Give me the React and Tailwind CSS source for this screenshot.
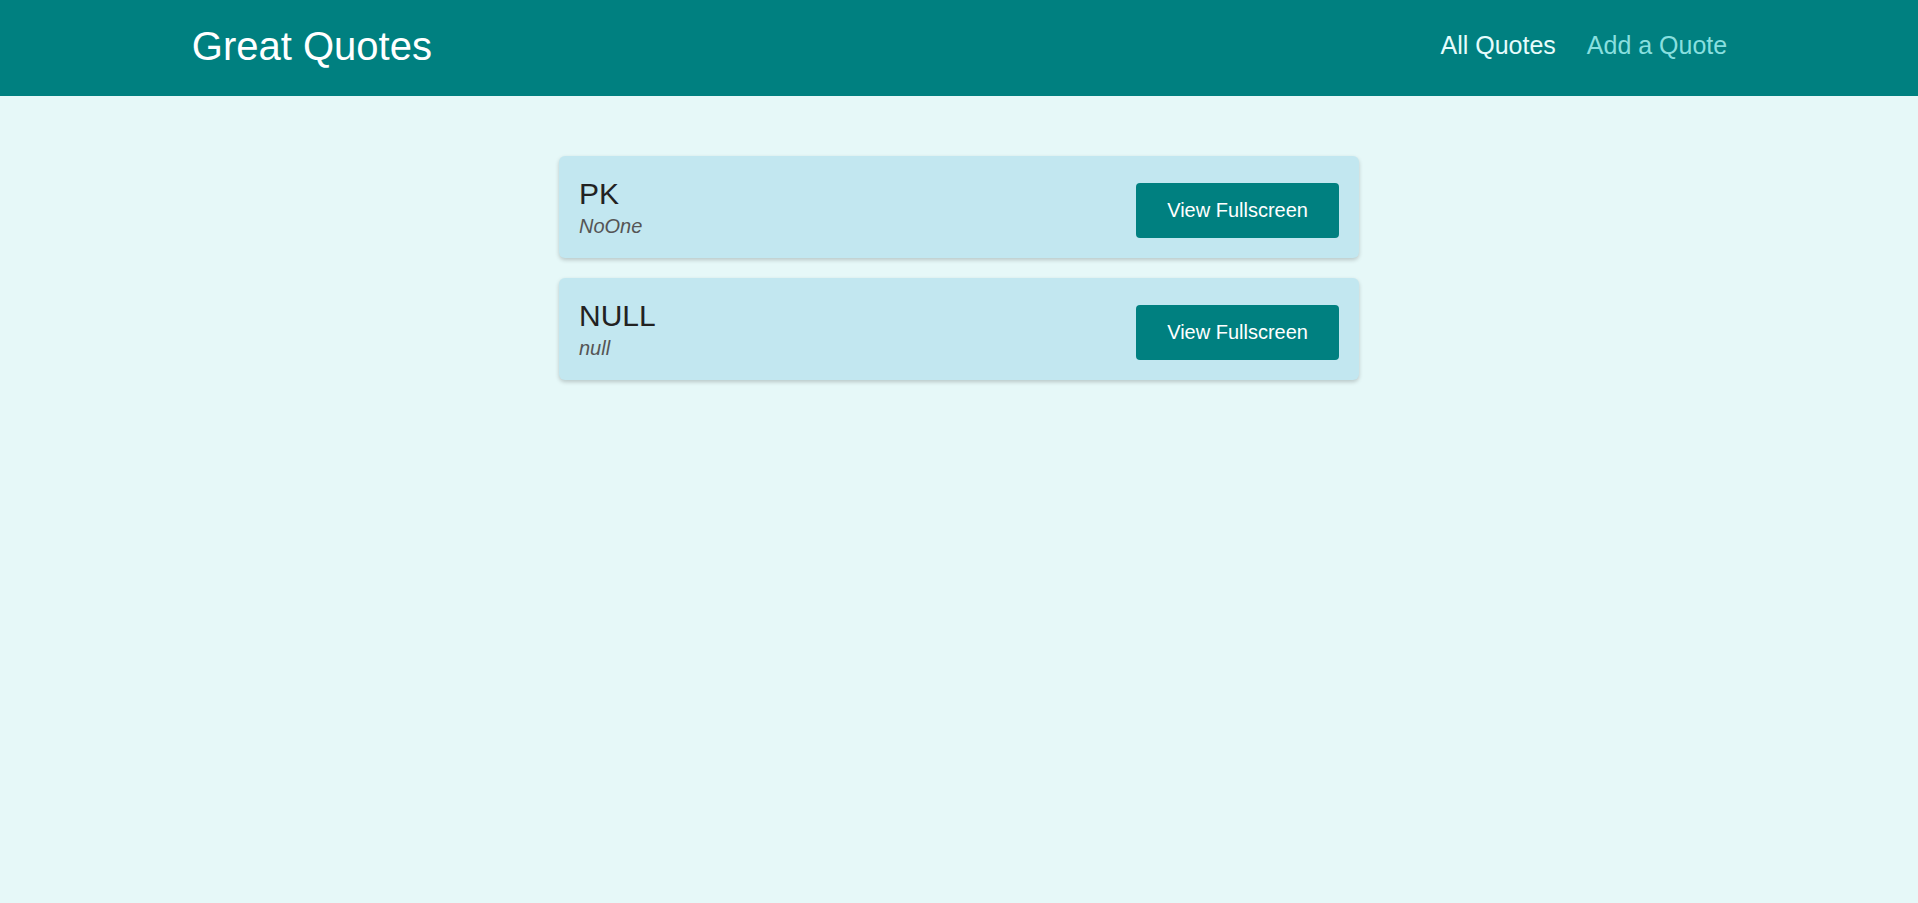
import React from "react";

const quotes = [
  { id: "q1", text: "PK", author: "NoOne" },
  { id: "q2", text: "NULL", author: "null" },
];

function QuoteItem({ text, author }) {
  return (
    <li className="flex items-end justify-between w-[800px] p-5 bg-[#c2e7f0] rounded-[6px] shadow-[0_2px_4px_rgba(0,0,0,0.2)]">
      <figure>
        <blockquote className="text-[30px] leading-[36px] text-[#222222]">{text}</blockquote>
        <figcaption className="mt-[2px] text-[20px] leading-[24px] italic text-[#555555]">{author}</figcaption>
      </figure>
      <button className="px-[31px] py-4 text-[20px] leading-[23px] text-white bg-[#008080] rounded-[4px]">
        View Fullscreen
      </button>
    </li>
  );
}

export default function App() {
  return (
    <div className="min-h-[903px] bg-[#e6f8f8] font-['Liberation_Sans',Arial,sans-serif]">
      <header className="h-[96px] pb-[4px] bg-[#008080] pl-[10%] pr-[calc(10%-1px)] flex items-center justify-between">
        <div className="text-[40px] text-white">Great Quotes</div>
        <nav>
          <ul className="flex gap-[31px] text-[25px]">
            <li>
              <a className="text-[#e6fcfc]">All Quotes</a>
            </li>
            <li>
              <a className="text-[#88dfdf]">Add a Quote</a>
            </li>
          </ul>
        </nav>
      </header>
      <main>
        <ul className="w-[800px] mx-auto pt-[60px] flex flex-col gap-5">
          {quotes.map((q) => (
            <QuoteItem key={q.id} text={q.text} author={q.author} />
          ))}
        </ul>
      </main>
    </div>
  );
}
